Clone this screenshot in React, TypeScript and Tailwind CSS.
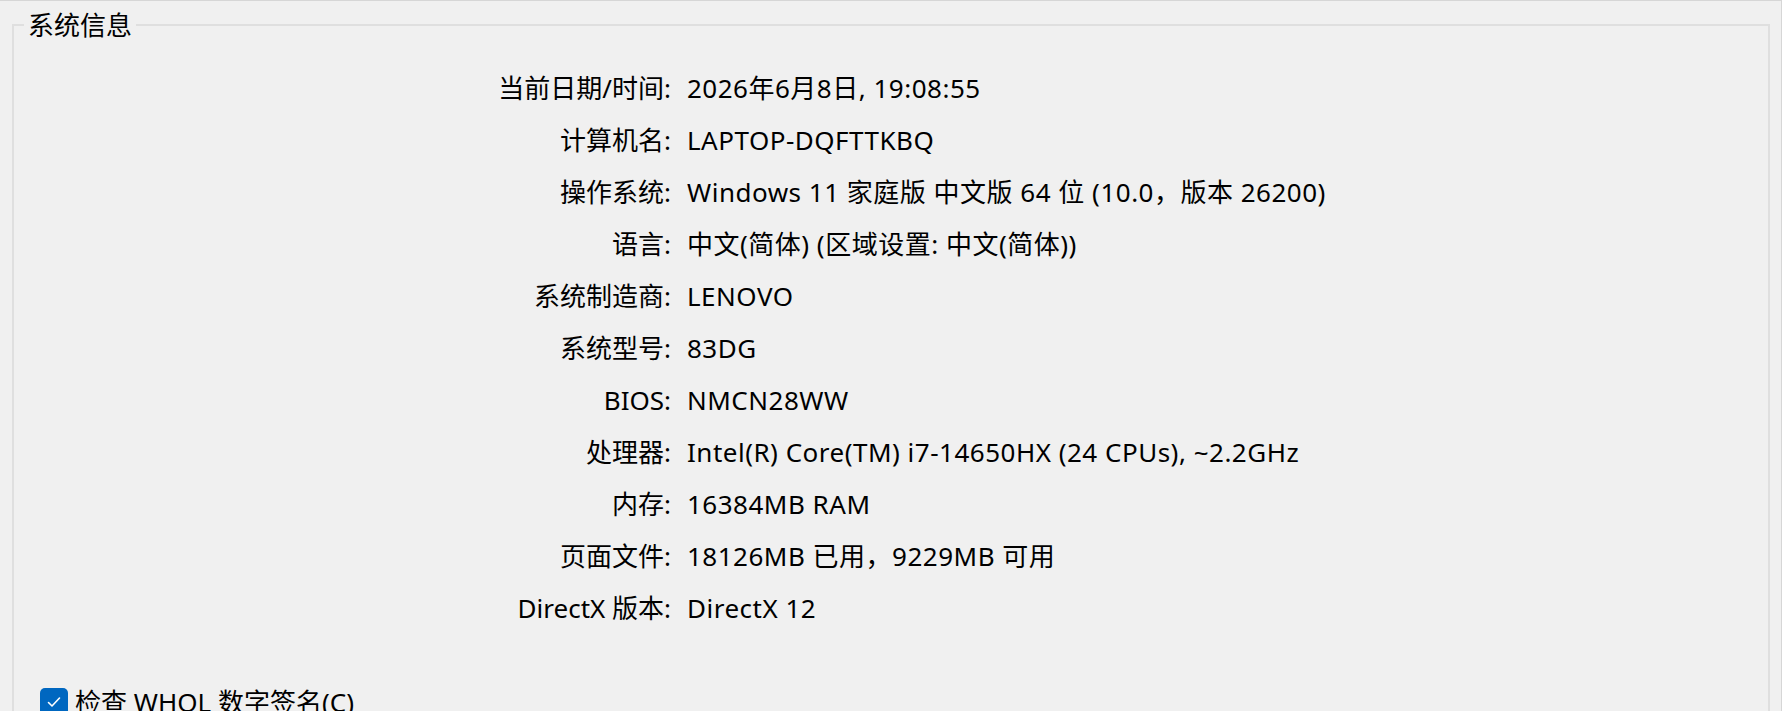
const rows: [string, string][] = [
  ['当前日期/时间:', '2026年6月8日, 19:08:55'],
  ['计算机名:', 'LAPTOP-DQFTTKBQ'],
  ['操作系统:', 'Windows 11 家庭版 中文版 64 位 (10.0，版本 26200)'],
  ['语言:', '中文(简体) (区域设置: 中文(简体))'],
  ['系统制造商:', 'LENOVO'],
  ['系统型号:', '83DG'],
  ['BIOS:', 'NMCN28WW'],
  ['处理器:', 'Intel(R) Core(TM) i7-14650HX (24 CPUs), ~2.2GHz'],
  ['内存:', '16384MB RAM'],
  ['页面文件:', '18126MB 已用，9229MB 可用'],
  ['DirectX 版本:', 'DirectX 12'],
];

export default function App() {
  return (
    <div
      className="w-full h-[711px] overflow-hidden bg-[#f0f0f0] border-t border-r border-[#d6d6d6] text-black text-[26px]"
      style={{ fontFamily: '"Noto Sans", "Noto Sans CJK SC", sans-serif' }}
    >
      <fieldset className="mt-[7px] ml-[12px] mr-[11px] pl-[10px] pr-4 pb-4 border-2 border-[#dfdfdf]">
        <legend className="px-1 leading-[34px]">系统信息</legend>

        <div className="grid grid-cols-[647px_1fr] gap-x-[16px] pt-[20px]">
          {rows.map(([label, value]) => (
            <div key={label} className="contents">
              <div className="h-[52px] flex items-center justify-end whitespace-nowrap">{label}</div>
              <div className="h-[52px] flex items-center whitespace-nowrap tracking-[0.5px]">{value}</div>
            </div>
          ))}
        </div>

        <label className="mt-[54px] ml-[16px] flex items-center gap-[7px]">
          <span className="w-[28px] h-[28px] rounded-[5px] bg-[#0067c0] flex items-center justify-center shrink-0">
            <svg width="16" height="16" viewBox="0 0 16 16" fill="none">
              <path d="M2.5 8.5 L6 12 L13.5 4" stroke="white" strokeWidth="1.6" strokeLinecap="round" strokeLinejoin="round" />
            </svg>
          </span>
          <span className="leading-[28px]">检查 WHQL 数字签名(C)</span>
        </label>
      </fieldset>
    </div>
  );
}
